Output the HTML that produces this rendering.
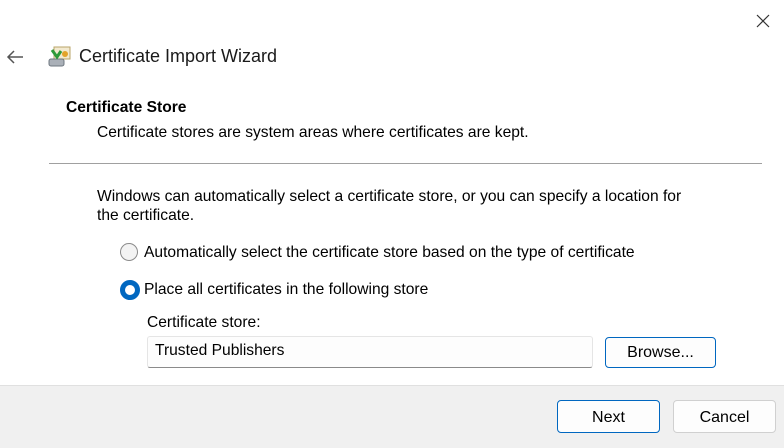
<!DOCTYPE html>
<html><head><style>
body{margin:0;width:784px;height:447px;background:#fff;font-family:"Liberation Sans",sans-serif;color:#000;position:relative;overflow:hidden}
.a{position:absolute;white-space:nowrap}
.t{font-size:15.6px}
.btn{position:absolute;box-sizing:border-box;border:1px solid #d0d0d0;border-radius:4px;background:#fdfdfd;font-size:16px;text-align:center}
</style></head><body>
<svg class="a" style="left:754px;top:12px" width="18" height="18"><path d="M3 3L15 15M15 3L3 15" stroke="#333" stroke-width="1.2"/></svg>
<svg class="a" style="left:5px;top:48px" width="20" height="18"><path d="M18 9H3M9 3L3 9L9 15" stroke="#555" stroke-width="1.5" fill="none"/></svg>
<svg class="a" style="left:46px;top:44px" width="26" height="26">
<rect x="8" y="3" width="16" height="12" fill="#f3ead0" stroke="#b9a46a"/>
<circle cx="19" cy="10" r="3" fill="#e3a32a"/>
<rect x="3" y="15" width="15" height="7" rx="2" fill="#aab0b8" stroke="#6f7780"/>
<path d="M6 6L11 13L15 7" stroke="#2e9a3a" stroke-width="3" fill="none"/>
</svg>
<div class="a" style="left:79px;top:46px;font-size:18px;color:#1a1a1a">Certificate Import Wizard</div>
<div class="a t" style="left:66px;top:99px;font-weight:bold">Certificate Store</div>
<div class="a t" style="left:97px;top:124px">Certificate stores are system areas where certificates are kept.</div>
<div class="a" style="left:49px;top:163px;width:713px;height:1px;background:#a0a0a0"></div>
<div class="a t" style="left:97px;top:188px">Windows can automatically select a certificate store, or you can specify a location for</div>
<div class="a t" style="left:97px;top:207px">the certificate.</div>
<div class="a" style="left:120px;top:243px;width:18px;height:18px;box-sizing:border-box;border:1px solid #8a8a8a;border-radius:50%;background:#f3f3f3"></div>
<div class="a t" style="left:144px;top:244px">Automatically select the certificate store based on the type of certificate</div>
<div class="a" style="left:120px;top:280px;width:20px;height:20px;box-sizing:border-box;border:5.5px solid #0067c0;border-radius:50%;background:#fff"></div>
<div class="a t" style="left:144px;top:281px">Place all certificates in the following store</div>
<div class="a t" style="left:147px;top:314px">Certificate store:</div>
<div class="a" style="left:147px;top:336px;width:446px;height:32px;box-sizing:border-box;border:1px solid #e5e5e5;border-bottom:1px solid #8a8a8a;border-radius:3px;background:#fdfdfd"></div>
<div class="a t" style="left:155px;top:342px">Trusted Publishers</div>
<div class="btn" style="left:605px;top:337px;width:111px;height:31px;line-height:29px;border-color:#0067c0">Browse...</div>
<div class="a" style="left:0;top:385px;width:784px;height:62px;background:#f0f0f0;border-top:1px solid #e0e0e0"></div>
<div class="btn" style="left:557px;top:400px;width:103px;height:33px;line-height:33px;border-color:#0067c0">Next</div>
<div class="btn" style="left:673px;top:400px;width:103px;height:33px;line-height:33px">Cancel</div>
</body></html>
